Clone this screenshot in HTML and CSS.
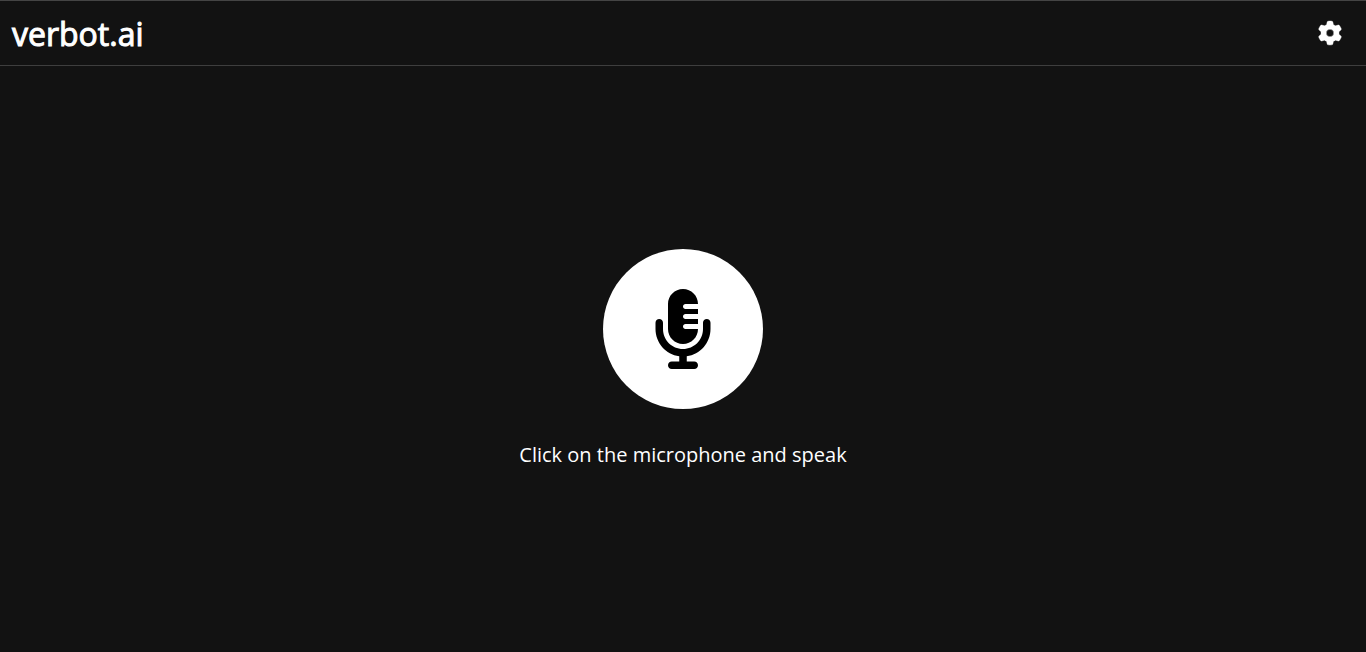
FILE: index.html
```html
<!DOCTYPE html>
<html lang="en">
<head>
<meta charset="utf-8">
<title>verbot.ai</title>
<link rel="stylesheet" href="styles.css">
</head>
<body>
<header class="topbar">
  <h1 class="brand">verbot.ai</h1>
  <button class="settings" type="button" aria-label="Settings">
    <svg class="settings-icon" viewBox="0 0 512 512" aria-hidden="true"><path fill="currentColor" d="M495.900 166.600c3.200 8.700 .5 18.400-6.400 24.600l-43.300 39.400c1.100 8.300 1.700 16.800 1.700 25.400s-.6 17.100-1.700 25.400l43.300 39.400c6.900 6.200 9.600 15.900 6.400 24.600c-4.400 11.900-9.700 23.300-15.800 34.300l-4.700 8.100c-6.600 11-14 21.400-22.100 31.200c-5.900 7.200-15.700 9.600-24.500 6.800l-55.700-17.700c-13.400 10.300-28.200 18.900-44 25.400l-12.500 57.100c-2 9.100-9 16.300-18.200 17.800c-13.800 2.300-28 3.500-42.500 3.500s-28.700-1.200-42.500-3.500c-9.200-1.500-16.200-8.700-18.200-17.800l-12.500-57.100c-15.800-6.500-30.600-15.100-44-25.400L83.100 425.900c-8.800 2.800-18.600 .3-24.500-6.800c-8.100-9.800-15.500-20.200-22.100-31.200l-4.700-8.100c-6.100-11-11.400-22.400-15.800-34.300c-3.200-8.700-.5-18.400 6.400-24.600l43.300-39.400C64.600 273.100 64 264.600 64 256s.6-17.100 1.700-25.400L22.400 191.200c-6.900-6.200-9.600-15.900-6.400-24.600c4.400-11.900 9.700-23.300 15.800-34.300l4.700-8.100c6.600-11 14-21.400 22.100-31.200c5.900-7.200 15.700-9.600 24.500-6.800l55.700 17.700c13.400-10.300 28.200-18.900 44-25.400l12.500-57.100c2-9.100 9-16.300 18.200-17.800C227.300 1.200 241.500 0 256 0s28.700 1.200 42.500 3.500c9.200 1.500 16.200 8.700 18.200 17.800l12.500 57.100c15.800 6.500 30.600 15.100 44 25.400l55.700-17.700c8.800-2.800 18.600-.3 24.500 6.800c8.100 9.800 15.500 20.200 22.100 31.200l4.700 8.100c6.100 11 11.400 22.400 15.800 34.300zM256 336a80 80 0 1 0 0-160 80 80 0 1 0 0 160z"/></svg>
  </button>
</header>
<main class="stage">
  <button class="mic" type="button" aria-label="Microphone">
    <svg class="mic-icon" viewBox="0 0 384 512" aria-hidden="true"><path fill="currentColor" d="M96 96V256c0 53 43 96 96 96s96-43 96-96H208c-8.800 0-16-7.200-16-16s7.200-16 16-16h80V192H208c-8.800 0-16-7.200-16-16s7.200-16 16-16h80V128H208c-8.800 0-16-7.200-16-16s7.200-16 16-16h80c0-53-43-96-96-96S96 43 96 96zM320 240v16c0 70.700-57.300 128-128 128s-128-57.300-128-128V216c0-13.300-10.700-24-24-24s-24 10.700-24 24v40c0 89.100 66.200 162.700 152 174.400V464H120c-13.300 0-24 10.700-24 24s10.700 24 24 24h144c13.300 0 24-10.700 24-24s-10.700-24-24-24H216V430.400c85.800-11.700 152-85.300 152-174.400V216c0-13.300-10.700-24-24-24s-24 10.700-24 24v24z"/></svg>
  </button>
  <p class="hint">Click on the microphone and speak</p>
</main>
</body>
</html>
```
FILE: styles.css
```css
* { box-sizing: border-box; }
body {
  margin: 0;
  min-height: 100vh;
  display: flex;
  flex-direction: column;
  background: #121212;
  color: #fff;
  font-family: "Open Sans", "Noto Sans", sans-serif;
}
.topbar {
  display: flex;
  align-items: center;
  justify-content: space-between;
  padding: 8px 24px 8px 12px;
  border-top: 1px solid #444;
  border-bottom: 1px solid #3e3e3e;
}
.brand {
  margin: 0;
  padding-top: 2px;
  font-size: 32px;
  line-height: 46px;
  font-weight: 400;
  -webkit-text-stroke: 1px currentColor;
}
.settings {
  display: flex;
  padding: 0;
  border: 0;
  background: none;
  color: inherit;
}
.settings-icon {
  width: 24px;
  height: 24px;
  overflow: visible;
  stroke: currentColor;
  stroke-width: 8;
}
.stage {
  flex: 1;
  display: flex;
  flex-direction: column;
  align-items: center;
  justify-content: center;
  gap: 32px;
}
.mic {
  display: flex;
  align-items: center;
  justify-content: center;
  width: 160px;
  height: 160px;
  padding: 0;
  border: 0;
  border-radius: 50%;
  background: #fff;
  color: #000;
}
.mic-icon { width: 60px; height: 80px; }
.hint {
  margin: 0;
  font-size: 20px;
  line-height: 28px;
}
```
